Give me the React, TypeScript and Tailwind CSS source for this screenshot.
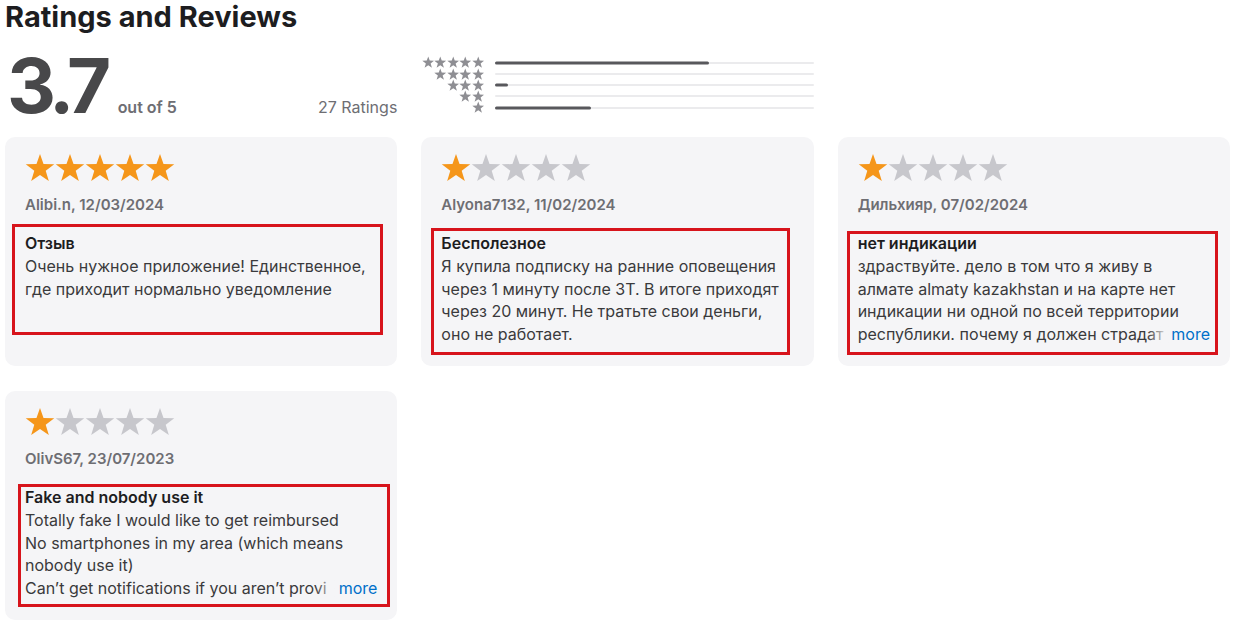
import React from "react";

function starPoints(cx: number, cy: number, R: number, r: number) {
  const pts: string[] = [];
  for (let i = 0; i < 10; i++) {
    const rad = i % 2 === 0 ? R : r;
    const a = -Math.PI / 2 + (i * Math.PI) / 5;
    pts.push(`${(cx + rad * Math.cos(a)).toFixed(2)},${(cy + rad * Math.sin(a)).toFixed(2)}`);
  }
  return pts.join(" ");
}

const STAR = starPoints(50, 53, 50, 20);

function Star({ size, color }: { size: number; color: string }) {
  return (
    <svg width={size} height={size} viewBox="0 0 100 100" className="block shrink-0">
      <polygon points={STAR} fill={color} />
    </svg>
  );
}

function Stars({ n }: { n: number }) {
  return (
    <div className="flex h-[30px] items-center">
      {[0, 1, 2, 3, 4].map((i) => (
        <Star key={i} size={30} color={i < n ? "#f5961a" : "#c7c7cc"} />
      ))}
    </div>
  );
}

type Review = {
  stars: number;
  user: string;
  title: string;
  lines: string[];
  truncated?: boolean;
  box: { left: number; top: number; width: number; height: number };
};

const reviews: Review[] = [
  {
    stars: 5,
    user: "Alibi.n, 12/03/2024",
    title: "Отзыв",
    lines: ["Очень нужное приложение! Единственное,", "где приходит нормально уведомление"],
    box: { left: 7, top: 87, width: 371, height: 111 },
  },
  {
    stars: 1,
    user: "Alyona7132, 11/02/2024",
    title: "Бесполезное",
    lines: [
      "Я купила подписку на ранние оповещения",
      "через 1 минуту после ЗТ. В итоге приходят",
      "через 20 минут. Не тратьте свои деньги,",
      "оно не работает.",
    ],
    box: { left: 10, top: 91, width: 359, height: 127 },
  },
  {
    stars: 1,
    user: "Дильхияр, 07/02/2024",
    title: "нет индикации",
    lines: [
      "здраствуйте. дело в том что я живу в",
      "алмате almaty kazakhstan и на карте нет",
      "индикации ни одной по всей территории",
      "республики. почему я должен страдат",
    ],
    truncated: true,
    box: { left: 9, top: 94, width: 371, height: 124 },
  },
  {
    stars: 1,
    user: "OlivS67, 23/07/2023",
    title: "Fake and nobody use it",
    lines: [
      "Totally fake I would like to get reimbursed",
      "No smartphones in my area (which means",
      "nobody use it)",
      "Can’t get notifications if you aren’t provi",
    ],
    truncated: true,
    box: { left: 13, top: 93, width: 372, height: 123 },
  },
];

function Card({ r }: { r: Review }) {
  return (
    <div className="relative h-[229px] rounded-[10px] bg-[#f5f5f7] px-[20px] pt-[16px]">
      <Stars n={r.stars} />
      <div className="mt-[12px] text-[15px] font-semibold leading-[20px] text-[#6e6e73]">{r.user}</div>
      <div className="mt-[17px] text-[16px] leading-[22.8px] text-[#3a3a3c]">
        <div className="font-semibold text-[#1d1d1f]">{r.title}</div>
        {r.lines.map((l, i) => {
          const last = i === r.lines.length - 1;
          if (last && r.truncated) {
            return (
              <div key={i} className="flex items-center whitespace-nowrap">
                <span className="relative min-w-0 flex-1 overflow-hidden">
                  <span>{l}</span>
                  <span className="absolute right-0 top-0 h-full w-[22px] bg-gradient-to-r from-[#f5f5f700] to-[#f5f5f7]" />
                </span>
                <span className="ml-[2px] text-[#0070c9]">more</span>
              </div>
            );
          }
          return (
            <div key={i} className="whitespace-nowrap">
              {l}
            </div>
          );
        })}
      </div>
      <div
        className="pointer-events-none absolute border-[3px] border-[#d7141c]"
        style={{ left: r.box.left, top: r.box.top, width: r.box.width, height: r.box.height }}
      />
    </div>
  );
}

const hist = [
  { n: 5, pct: 213 / 318 },
  { n: 4, pct: 0 },
  { n: 3, pct: 13 / 318 },
  { n: 2, pct: 0 },
  { n: 1, pct: 96 / 318 },
];

export default function App() {
  return (
    <div
      className="min-h-[626px] w-[1236px] bg-white pl-[5px]"
      style={{ fontFamily: "Inter, 'Noto Sans', sans-serif" }}
    >
      <h1 className="text-[29px] font-bold leading-[34px] tracking-[0px] text-[#1d1d1f]">Ratings and Reviews</h1>
      <div className="mt-[13px] grid w-[1225px] grid-cols-3 gap-x-[24px]">
        <div className="flex h-[76px] items-baseline justify-between">
          <div className="flex items-baseline">
            <span className="ml-[2px] text-[76px] font-bold leading-[76px] tracking-[-5.5px] text-[#48484a]">3.7</span>
            <span className="ml-[12px] text-[16px] font-semibold text-[#6e6e73]">out of 5</span>
          </div>
          <span className="text-[16px] text-[#6e6e73]">27 Ratings</span>
        </div>
        <div className="flex flex-col pt-[10px]">
          {hist.map((h) => (
            <div key={h.n} className="flex h-[11.25px] items-center">
              <div className="flex w-[63px] justify-end">
                {Array.from({ length: h.n }).map((_, i) => (
                  <Star key={i} size={12.5} color="#8e8e93" />
                ))}
              </div>
              <div className="ml-[11px] h-[2px] flex-1 rounded-full bg-[#ebebed]">
                <div className="h-[3px] -translate-y-[0.5px] rounded-full bg-[#58585c]" style={{ width: `${h.pct * 100}%` }} />
              </div>
            </div>
          ))}
        </div>
        <div />
      </div>
      <div className="mt-[14px] grid w-[1225px] grid-cols-3 gap-x-[24px] gap-y-[25px]">
        {reviews.map((r, i) => (
          <Card key={i} r={r} />
        ))}
      </div>
    </div>
  );
}
